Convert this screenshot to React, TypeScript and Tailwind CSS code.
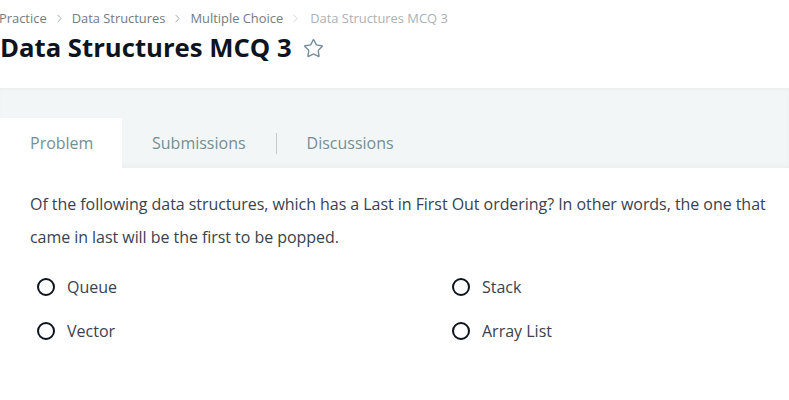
import { Star, ChevronRight } from 'lucide-react';

const options = ['Queue', 'Stack', 'Vector', 'Array List'];

export default function App() {
    return (
        <div className="w-[789px] h-[400px] bg-white overflow-hidden" style={{ fontFamily: '"Open Sans", sans-serif' }}>
            {/* Header */}
            <div className="h-[88px] pt-[8px]">
                <nav className="flex items-center text-[12.9px] leading-[20px] text-[#737b83] -ml-[1px]">
                    <span>Practice</span>
                    <ChevronRight className="mx-[6px] w-[13px] h-[13px] text-[#8a9299]" strokeWidth={1.5} />
                    <span>Data Structures</span>
                    <ChevronRight className="mx-[6px] w-[13px] h-[13px] text-[#8a9299]" strokeWidth={1.5} />
                    <span>Multiple Choice</span>
                    <ChevronRight className="ml-[6px] mr-[8px] w-[13px] h-[13px] text-[#c4cacf]" strokeWidth={1.5} />
                    <span className="text-[#a9b2b8]">Data Structures MCQ 3</span>
                </nav>
                <div className="flex items-center mt-[2px]">
                    <h1 className="text-[25.7px] leading-[36px] font-bold text-[#0e141e]">Data Structures MCQ 3</h1>
                    <Star className="ml-[11px] w-[21px] h-[21px] text-[#738f9c]" strokeWidth={1.6} />
                </div>
            </div>

            {/* Tabs */}
            <div className="h-[80px] bg-[#f3f6f7] flex items-end shadow-[inset_0_2px_3px_rgba(0,0,0,0.03),inset_0_-6px_6px_-4px_rgba(0,0,0,0.04)]">
                <div className="flex items-center h-[50px] text-[16px] text-[#738f93]">
                    <div className="h-full w-[122px] bg-white flex items-center pl-[30px]">Problem</div>
                    <div className="pl-[30px] pr-[30px]">Submissions</div>
                    <div className="w-px h-[21px] bg-[#c0ccd0]" />
                    <div className="pl-[30px]">Discussions</div>
                </div>
            </div>

            {/* Question */}
            <div className="pl-[30px] pr-[12px] pt-[20px]">
                <p className="text-[16px] leading-[33px] text-[#39424e] tracking-[-0.05px]">
                    Of the following data structures, which has a Last in First Out ordering? In other words, the one that came in last will be the first to be popped.
                </p>
                <div className="grid grid-cols-[415px_1fr] mt-[21px] ml-[7px] gap-y-[20px]">
                    {options.map((o) => (
                        <label key={o} className="flex items-center gap-[12px] text-[16px] leading-[24px] text-[#39424e]">
                            <span className="w-[18px] h-[18px] rounded-full border-2 border-[#0e141e]" />
                            {o}
                        </label>
                    ))}
                </div>
            </div>
        </div>
    );
}
